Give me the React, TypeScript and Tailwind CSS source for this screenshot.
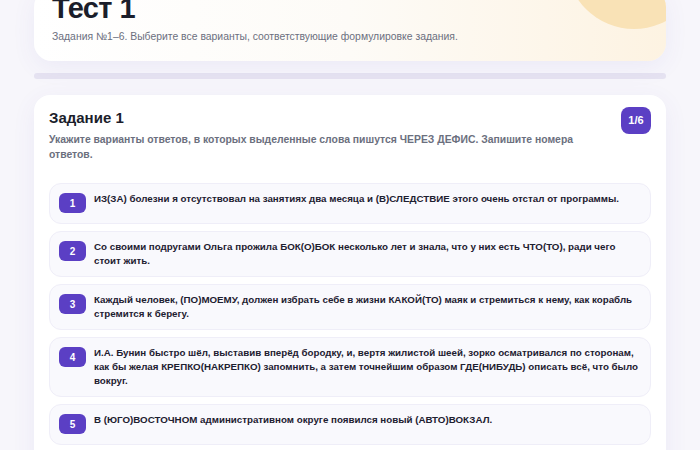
import React from "react"

const items = [
  "ИЗ(ЗА) болезни я отсутствовал на занятиях два месяца и (В)СЛЕДСТВИЕ этого очень отстал от программы.",
  "Со своими подругами Ольга прожила БОК(О)БОК несколько лет и знала, что у них есть ЧТО(ТО), ради чего стоит жить.",
  "Каждый человек, (ПО)МОЕМУ, должен избрать себе в жизни КАКОЙ(ТО) маяк и стремиться к нему, как корабль стремится к берегу.",
  "И.А. Бунин быстро шёл, выставив вперёд бородку, и, вертя жилистой шеей, зорко осматривался по сторонам, как бы желая КРЕПКО(НАКРЕПКО) запомнить, а затем точнейшим образом ГДЕ(НИБУДЬ) описать всё, что было вокруг.",
  "В (ЮГО)ВОСТОЧНОМ административном округе появился новый (АВТО)ВОКЗАЛ.",
  "Мы ЧУТЬ(ЧУТЬ) не опоздали на поезд, ТАК(КАК) долго искали такси.",
]

export default function App() {
  return (
    <div className="h-[450px] overflow-hidden bg-[#f7f6fb] px-[34px] font-['Liberation_Sans',Arial,sans-serif] text-[#1d2030]">
      {/* HEADER */}
      <header className="relative -mt-[11px] overflow-hidden rounded-[18px] bg-gradient-to-r from-white via-[#fdfbf7] to-[#fdf3e2] px-[18px] pb-[16px] pt-0 shadow-[0_6px_24px_rgba(90,70,180,0.07)]">
        <div className="absolute -right-[36px] -top-[96px] h-[136px] w-[136px] rounded-full bg-[#f9e2b6]" />
        <h1 className="relative text-[29px] font-bold leading-[38px] tracking-[-0.6px] text-[#1b1e2b]">
          Тест 1
        </h1>
        <p className="relative mt-[2px] text-[10.4px] leading-[16px] text-[#6b6f7e]">
          Задания №1–6. Выберите все варианты, соответствующие формулировке задания.
        </p>
      </header>

      {/* PROGRESS */}
      <div className="mt-[12px] h-[6px] rounded-full bg-[#e6e3f1]" />

      {/* TASK CARD */}
      <section className="mt-[16px] rounded-[16px] bg-white px-[15px] pt-[12px] pb-4 shadow-[0_6px_24px_rgba(90,70,180,0.07)]">
        <div className="flex items-start gap-4">
          <div className="min-w-0 flex-1">
            <h2 className="text-[15px] font-bold leading-[22px] text-[#1b1e2b]">Задание 1</h2>
            <p className="mt-[3px] pr-[26px] text-[10.4px] font-bold leading-[15px] text-[#6b6f7e]">
              Укажите варианты ответов, в которых выделенные слова пишутся ЧЕРЕЗ ДЕФИС. Запишите номера ответов.
            </p>
          </div>
          <span className="flex h-[27px] w-[30px] shrink-0 items-center justify-center rounded-[8px] bg-[#5b3fc4] text-[11px] font-bold text-white">
            1/6
          </span>
        </div>

        <div className="mt-[21px] flex flex-col gap-[7px]">
          {items.map((text, i) => (
            <div
              key={i}
              className="flex min-h-[41px] items-start gap-[8px] rounded-[12px] border border-[#efeef8] bg-[#f9f9fd] px-[9px] pt-[9px] pb-[8px]"
            >
              <span className="flex h-[20px] w-[27px] shrink-0 items-center justify-center rounded-[6px] bg-[#5b3fc4] text-[10px] font-bold text-white">
                {i + 1}
              </span>
              <p className="-mt-[1px] flex-1 pr-[2px] text-[9.75px] font-bold leading-[14px] text-[#1d2030]">
                {text}
              </p>
            </div>
          ))}
        </div>
      </section>
    </div>
  )
}
